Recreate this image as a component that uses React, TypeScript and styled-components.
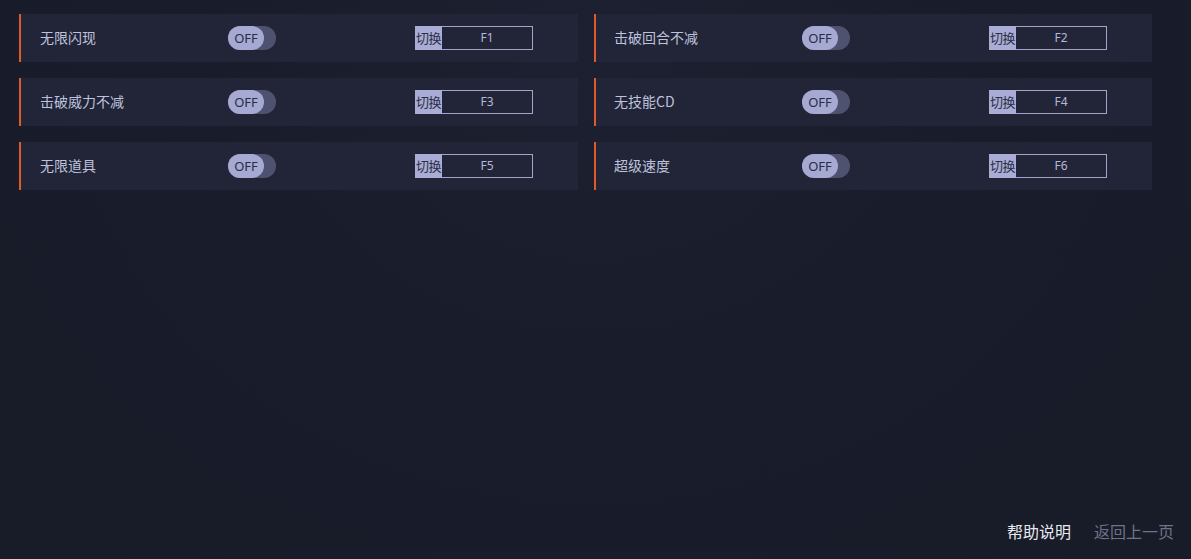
import React from "react";
import styled, { createGlobalStyle } from "styled-components";

const Global = createGlobalStyle`
  html, body { margin: 0; padding: 0; background: #181b29; }
  body { font-family: "Microsoft YaHei", "Noto Sans CJK SC", "Noto Sans", sans-serif; }
  * { box-sizing: border-box; }
`;

const Page = styled.div`
  height: 559px;
  display: flex;
  flex-direction: column;
  background: radial-gradient(ellipse at 50% 10%, #1d2030 0%, #191c2a 45%, #181b28 100%);
  padding: 14px 0 0 19px;
`;

const Grid = styled.div`
  display: grid;
  grid-template-columns: 559px 558px;
  column-gap: 16px;
  row-gap: 16px;
`;

const Card = styled.div<{ $right?: boolean }>`
  height: 48px;
  display: flex;
  align-items: center;
  background: #222538;
  border-left: 2px solid #e0592b;
  padding-left: ${(p) => (p.$right ? "18px" : "19px")};
`;

const Label = styled.div`
  width: 188px;
  font-size: 14px;
  color: #bfc2dc;
  line-height: 20px;
  margin-top: -2px;
`;

const Toggle = styled.div`
  width: 48px;
  height: 24px;
  border-radius: 12px;
  background: #4e5170;
  display: flex;
  align-items: center;
`;

const Knob = styled.div`
  width: 36px;
  height: 24px;
  border-radius: 12px;
  background: #a6a9d2;
  color: #2a2d46;
  font-size: 13px;
  font-family: "Noto Sans", "Liberation Sans", sans-serif;
  display: flex;
  align-items: center;
  justify-content: center;
`;

const Hotkey = styled.div`
  margin-left: 139px;
  width: 118px;
  height: 24px;
  border: 1px solid #a2a5c7;
  border-left: none;
  display: flex;
  align-items: stretch;
`;

const HotTag = styled.div`
  width: 27px;
  background: #a9acd4;
  color: #2c2f48;
  font-size: 13px;
  display: flex;
  align-items: center;
  justify-content: center;
  margin-top: -1px;
  margin-bottom: -1px;
  padding-bottom: 1px;
  letter-spacing: -0.5px;
`;

const HotKeyName = styled.div`
  flex: 1;
  color: #b5b8d4;
  font-size: 12px;
  font-family: "Noto Sans", "Liberation Sans", sans-serif;
  display: flex;
  align-items: center;
  justify-content: center;
  padding-bottom: 1px;
`;

const Spacer = styled.div`
  flex: 1;
`;

const Footer = styled.div`
  display: flex;
  justify-content: flex-end;
  gap: 23px;
  padding: 0 17px 17px 0;
`;

const FootLink = styled.span<{ $muted?: boolean }>`
  font-size: 16px;
  line-height: 22px;
  color: ${(p) => (p.$muted ? "#6f7288" : "#e8e9f0")};
`;

const items = [
  { name: "无限闪现", key: "F1" },
  { name: "击破回合不减", key: "F2" },
  { name: "击破威力不减", key: "F3" },
  { name: "无技能CD", key: "F4" },
  { name: "无限道具", key: "F5" },
  { name: "超级速度", key: "F6" },
];

export default function App() {
  return (
    <>
      <Global />
      <Page>
        <Grid>
          {items.map((it, i) => (
            <Card key={it.key} $right={i % 2 === 1}>
              <Label>{it.name}</Label>
              <Toggle>
                <Knob>OFF</Knob>
              </Toggle>
              <Hotkey>
                <HotTag>切换</HotTag>
                <HotKeyName>{it.key}</HotKeyName>
              </Hotkey>
            </Card>
          ))}
        </Grid>
        <Spacer />
        <Footer>
          <FootLink>帮助说明</FootLink>
          <FootLink $muted>返回上一页</FootLink>
        </Footer>
      </Page>
    </>
  );
}
